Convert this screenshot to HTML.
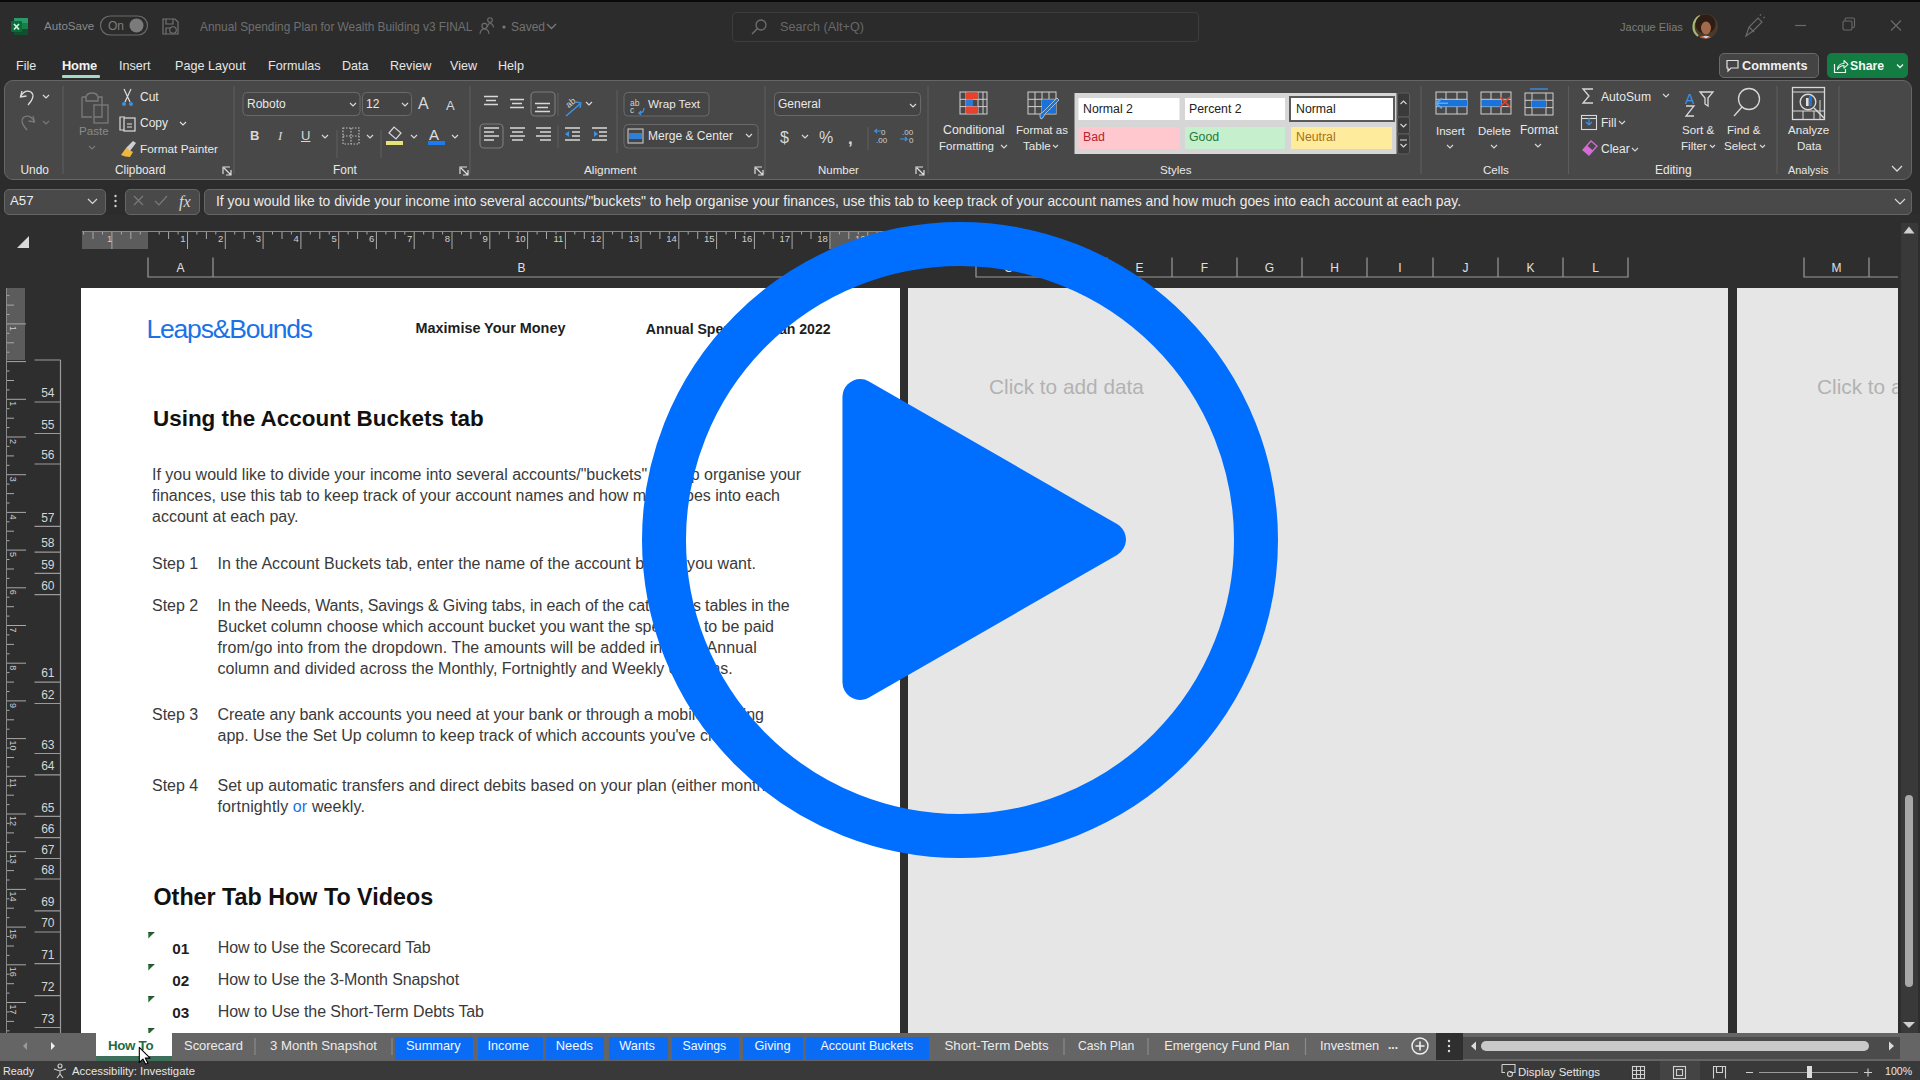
<!DOCTYPE html>
<html><head><meta charset="utf-8">
<style>
*{margin:0;padding:0;box-sizing:border-box}
html,body{width:1920px;height:1080px;overflow:hidden;background:#2c2c2c;font-family:"Liberation Sans",sans-serif;position:relative}
.a{position:absolute}
.t{position:absolute;white-space:nowrap;line-height:1}
#top{left:0;top:0;width:1920px;height:2px;background:#0a0a0a}
#ribbon{left:4px;top:80px;width:1908px;height:100px;background:#484848;border:1px solid #666;border-radius:9px}
#sheetbg{left:0;top:215px;width:1920px;height:818px;background:#2e2e2e}
#page{left:81px;top:288px;width:819px;height:745px;background:#fff}
#gray1{left:908px;top:288px;width:820px;height:745px;background:#e6e6e6}
#gray2{left:1737px;top:288px;width:161px;height:745px;background:#e6e6e6}
#vscroll{left:1901px;top:223px;width:17px;height:810px;background:#393939}
#tabbar{left:0;top:1033px;width:1920px;height:28px;background:#656565}
#status{left:0;top:1061px;width:1920px;height:19px;background:#393939}
</style></head><body>
<div id="top" class="a"></div>
<div id="ribbon" class="a"></div>
<div id="sheetbg" class="a"></div>
<div id="page" class="a"></div>
<div id="gray1" class="a"></div>
<div id="gray2" class="a"></div>
<div id="vscroll" class="a"></div>
<div id="tabbar" class="a"></div>
<div id="status" class="a"></div>
<!-- ===== TITLE BAR ===== -->
<svg class="a" style="left:0;top:0" width="600" height="48">
 <rect x="14" y="18" width="14" height="17" rx="1" fill="#15804a"/>
 <rect x="14" y="18" width="14" height="5" fill="#2a9a68"/>
 <rect x="14" y="29" width="14" height="6" fill="#10502e"/>
 <rect x="11" y="21" width="11" height="11" rx="1" fill="#0f6a3a"/>
 <path d="M14 24 L19 29.5 M19 24 L14 29.5" stroke="#c8f2dc" stroke-width="1.8"/>
 <rect x="100.5" y="16" width="47" height="19" rx="9.5" fill="none" stroke="#6b6b6b" stroke-width="1.2"/>
 <circle cx="136.5" cy="25.5" r="7" fill="#7b7b7b"/>
 <path d="M163 19 h12 l3 3 v12 h-15 z M166 19 v5 h7 v-5 M166 34 v-6 h6" fill="none" stroke="#727272" stroke-width="1.2"/>
 <circle cx="173" cy="30" r="3.3" fill="#2c2c2c" stroke="#727272" stroke-width="1.1"/>
 <circle cx="484.5" cy="26" r="2.6" fill="none" stroke="#6f6f6f" stroke-width="1.1"/>
 <path d="M480 34 q0.5 -5 4.5 -5 q4 0 4.5 5" fill="none" stroke="#6f6f6f" stroke-width="1.1"/>
 <circle cx="490" cy="20" r="2.3" fill="none" stroke="#6f6f6f" stroke-width="1.1"/>
 <path d="M487.5 27 q0.5 -3.5 2.5 -3.5 q3 0 3.5 4" fill="none" stroke="#6f6f6f" stroke-width="1.1"/>
 <circle cx="504" cy="27" r="1.6" fill="#7a7a7a"/>
 <path d="M547 24 l4.5 4.5 l4.5 -4.5" fill="none" stroke="#7a7a7a" stroke-width="1.3"/>
</svg>
<div class="t" style="left:44px;top:17px;font-size:11.6px;line-height:18px;color:#8a8a8a">AutoSave</div>
<div class="t" style="left:108px;top:17px;font-size:12px;line-height:18px;color:#7d7d7d">On</div>
<div class="t" style="left:200px;top:18px;font-size:11.85px;line-height:18px;color:#6f6f6f">Annual Spending Plan for Wealth Building v3 FINAL</div>
<div class="t" style="left:511px;top:18px;font-size:12px;line-height:18px;color:#727272">Saved</div>
<div class="a" style="left:732px;top:12px;width:467px;height:30px;border:1px solid #3d3d3d;border-radius:4px;background:#2b2b2b"></div>
<svg class="a" style="left:748px;top:16px" width="24" height="22"><circle cx="13" cy="9" r="5" fill="none" stroke="#6e6e6e" stroke-width="1.3"/><path d="M9.5 12.5 L4 18" stroke="#6e6e6e" stroke-width="1.4"/></svg>
<div class="t" style="left:780px;top:18px;font-size:12.65px;line-height:18px;color:#686868">Search (Alt+Q)</div>
<div class="t" style="left:1620px;top:18px;font-size:11.1px;line-height:18px;color:#7d7d7d">Jacque Elias</div>
<svg class="a" style="left:1690px;top:11px" width="32" height="32">
 <defs><clipPath id="av"><circle cx="15.5" cy="15.5" r="12"/></clipPath></defs>
 <circle cx="15.5" cy="15.5" r="12.5" fill="#4a3a2a"/>
 <path d="M8 25 A12 12 0 0 1 10 5" fill="none" stroke="#a8b870" stroke-width="2.2"/>
 <g clip-path="url(#av)">
  <circle cx="15.5" cy="13" r="10" fill="#2e1d14"/>
  <ellipse cx="16" cy="17" rx="5" ry="6.5" fill="#a26a4c"/>
  <path d="M5 29 q10 -9 21 0z" fill="#d4623a"/>
  <path d="M13 25 l3 3 l3 -3" fill="#c8d0e8"/>
 </g>
</svg>
<svg class="a" style="left:1738px;top:12px" width="180" height="30">
 <path d="M8 24 l3 -9 l9 -9 l4 4 l-9 9 z M11 15 l5 5" fill="none" stroke="#6a6a6a" stroke-width="1.2"/>
 <path d="M22 4 l1 -2 M25 6 l2 -1" stroke="#6a6a6a" stroke-width="1"/>
 <path d="M57 13.5 h11" stroke="#6a6a6a" stroke-width="1.2"/>
 <rect x="105" y="9" width="9" height="9" rx="1.5" fill="none" stroke="#6a6a6a" stroke-width="1.1"/>
 <path d="M107 9 v-1.5 q0 -1.5 1.5 -1.5 h6.5 q1.5 0 1.5 1.5 v6.5 q0 1.5 -1.5 1.5 h-1" fill="none" stroke="#6a6a6a" stroke-width="1.1"/>
 <path d="M153 8.5 l10 10 M163 8.5 l-10 10" stroke="#6a6a6a" stroke-width="1.2"/>
</svg>

<!-- ===== MENU ROW ===== -->
<div class="t" style="left:16px;top:56px;font-size:12.6px;line-height:20px;color:#e6e6e6">File</div>
<div class="t" style="left:62px;top:56px;font-size:12.9px;line-height:20px;color:#f2f2f2;font-weight:bold;letter-spacing:-0.2px">Home</div>
<div class="a" style="left:62px;top:75px;width:38px;height:2.5px;background:#a6d9c4;border-radius:1px"></div>
<div class="t" style="left:119px;top:56px;font-size:12.6px;line-height:20px;color:#e6e6e6">Insert</div>
<div class="t" style="left:175px;top:56px;font-size:12.6px;line-height:20px;color:#e6e6e6">Page Layout</div>
<div class="t" style="left:268px;top:56px;font-size:12.6px;line-height:20px;color:#e6e6e6">Formulas</div>
<div class="t" style="left:342px;top:56px;font-size:12.6px;line-height:20px;color:#e6e6e6">Data</div>
<div class="t" style="left:390px;top:56px;font-size:12.6px;line-height:20px;color:#e6e6e6">Review</div>
<div class="t" style="left:450px;top:56px;font-size:12.6px;line-height:20px;color:#e6e6e6">View</div>
<div class="t" style="left:498px;top:56px;font-size:12.6px;line-height:20px;color:#e6e6e6">Help</div>
<div class="a" style="left:1719px;top:53px;width:100px;height:25px;border:1px solid #6a6a6a;border-radius:5px;background:#444"></div>
<svg class="a" style="left:1725px;top:58px" width="16" height="16"><path d="M2 2.5 h11 v7.5 h-7 l-3 3 v-3 h-1 z" fill="none" stroke="#e0e0e0" stroke-width="1.2"/></svg>
<div class="t" style="left:1742px;top:56px;font-size:12.7px;line-height:20px;color:#f0f0f0;font-weight:bold">Comments</div>
<div class="a" style="left:1827px;top:53px;width:81px;height:25px;border-radius:5px;background:#127c42"></div>
<svg class="a" style="left:1833px;top:57px" width="76" height="18">
 <path d="M1.5 7 v8.5 h11 v-3.5" fill="none" stroke="#e8f5ec" stroke-width="1.2"/>
 <path d="M4.5 12.5 q0.5 -6 6.5 -6 v-3 l4 3.8 l-4 3.8 v-2.6 q-4 0 -6.5 4z" fill="none" stroke="#e8f5ec" stroke-width="1.1" stroke-linejoin="round"/>
 <path d="M64 7.5 l3 3 l3 -3" fill="none" stroke="#e8f5ec" stroke-width="1.3"/>
</svg>
<div class="t" style="left:1850px;top:56px;font-size:12.3px;line-height:20px;color:#f2f8f4;font-weight:bold">Share</div>
<!-- ===== RIBBON ===== -->
<svg class="a" style="left:0;top:80px" width="1920" height="102">
<g stroke="#5c5c5c" stroke-width="1.2">
 <path d="M63 6 V94"/><path d="M234 6 V94"/><path d="M470 6 V94"/><path d="M765 6 V94"/><path d="M928 6 V94"/>
 <path d="M1421 6 V94"/><path d="M1568.5 6 V94"/><path d="M1777 6 V94"/><path d="M1839 6 V94"/>
 <path d="M337 50 V78"/><path d="M617 10 V73"/><path d="M381 50 V78"/><path d="M558 13 V36"/><path d="M558 45 V68"/><path d="M868 47 V70"/>
</g>
<g fill="none" stroke="#dcdcdc" stroke-width="1.3">
 <!-- undo -->
 <path d="M22 11 l-1.5 6 l6 -1" /><path d="M21 16 q4 -7 10 -4 q5 4 -3 13"/>
 <path d="M43 15 l3 3 l3 -3" stroke-width="1.2"/>
</g>
<g fill="none" stroke="#7a7a7a" stroke-width="1.3">
 <path d="M33 36 l1.5 6 l-6 -1"/><path d="M34 41 q-4 -7 -10 -4 q-5 4 3 13"/>
 <path d="M43 41 l3 3 l3 -3" stroke-width="1.1"/>
 <!-- paste -->
 <path d="M82 17 h4 q1 -4 6 -4 q5 0 6 4 h4 v20 h-8"/><path d="M86 17 v4 h12 v-4"/>
 <path d="M82 17 v20 h10"/><rect x="94" y="25" width="14" height="18"/>
 <path d="M89 66 l3 3 l3 -3" stroke-width="1.1"/>
</g>
<g fill="none" stroke="#dedede" stroke-width="1.2">
 <!-- cut -->
 <path d="M124 9 l6 13 M131 9 l-6 13"/>
</g>
<circle cx="124" cy="24" r="2" fill="#3d8fe0"/><circle cx="131" cy="24" r="2" fill="#3d8fe0"/>
<g fill="none" stroke="#dedede" stroke-width="1.2">
 <!-- copy -->
 <path d="M125 37 h-5 v13 h4"/><rect x="124" y="38" width="11" height="13"/><path d="M127 44 h5 M127 47 h5"/>
 <path d="M180 42 l3 3 l3 -3"/>
 <!-- launcher -->
 <path d="M223 94 v-7 h7 M224 88 l7 7 M231 90 v5 h-5"/>
 <path d="M460 94 v-7 h7 M461 88 l7 7 M468 90 v5 h-5"/>
 <path d="M755 94 v-7 h7 M756 88 l7 7 M763 90 v5 h-5"/>
 <path d="M916 94 v-7 h7 M917 88 l7 7 M924 90 v5 h-5"/>
</g>
<path d="M121 75 l5 -7 l7 4 l-3 5 q-5 0 -9 -2z" fill="#f0b73a"/><path d="M126 68 l7 -7 l3 2 l-6 8z" fill="#cfcfcf"/>
<!-- font group -->
<rect x="243" y="12.5" width="117" height="23" rx="4" fill="#444" stroke="#6a6a6a"/>
<rect x="362.5" y="12.5" width="49" height="23" rx="4" fill="#444" stroke="#6a6a6a"/>
<g fill="none" stroke="#d8d8d8" stroke-width="1.2">
 <path d="M350 23 l3 3 l3 -3"/><path d="M402 23 l3 3 l3 -3"/>
 <path d="M322 55 l3 3 l3 -3"/><path d="M367 55 l3 3 l3 -3"/><path d="M411 55 l3 3 l3 -3"/><path d="M452 55 l3 3 l3 -3"/>
 <path d="M343 48 h16 v16 h-16z M351 48 v16 M343 56 h16" stroke-dasharray="1.5 1.5" stroke="#bdbdbd"/>
 <path d="M389 53 l5 -6 l7 6 l-5 6z" />
</g>
<rect x="386" y="61" width="17" height="4" fill="#e8e27a"/>
<rect x="428" y="61" width="17" height="4" fill="#1a7cf0"/>
<!-- alignment icons -->
<g stroke="#d8d8d8" stroke-width="1.4">
 <path d="M484 16.5 h14 M486 20.5 h10 M484 24.5 h14"/>
 <path d="M510 19.5 h14 M512 23.5 h10 M510 27.5 h14"/>
 <path d="M535 23.5 h15 M537 27.5 h11 M535 31.5 h15"/>
 <path d="M484 128 h15 M484 132 h10 M484 136 h15 M484 140 h10" transform="translate(0,-80)"/>
 <path d="M510 48 h15 M512 52 h11 M510 56 h15 M512 60 h11"/>
 <path d="M536 48 h15 M540 52 h11 M536 56 h15 M540 60 h11"/>
 <path d="M565 48 h15 M572 52 h8 M572 56 h8 M565 60 h15"/>
 <path d="M592 48 h15 M599 52 h8 M599 56 h8 M592 60 h15"/>
</g>
<path d="M565 54 l4 -3 v6z" fill="#3b93e6"/><path d="M598 54 l-4 -3 v6z" fill="#3b93e6"/>
<rect x="531" y="12" width="24" height="24" rx="4" fill="none" stroke="#7a7a7a" stroke-width="1.2"/>
<rect x="480" y="44" width="23" height="24" rx="4" fill="none" stroke="#7a7a7a" stroke-width="1.2"/>
<path d="M566 36 l14 -12" stroke="#3b93e6" stroke-width="1.6"/><path d="M576 22 l5 1 l-1 5" fill="none" stroke="#3b93e6" stroke-width="1.3"/>
<text x="565" y="26" font-size="9" fill="#d8d8d8" font-family="Liberation Sans" transform="rotate(-40 570 22)">ab</text>
<path d="M586 22 l3 3 l3 -3" fill="none" stroke="#d8d8d8" stroke-width="1.2"/>
<rect x="624" y="12.5" width="85" height="23.5" rx="4" fill="#454545" stroke="#6a6a6a"/>
<rect x="624" y="44.5" width="134" height="23.5" rx="4" fill="#454545" stroke="#6a6a6a"/>
<text x="630" y="26" font-size="8.5" fill="#d0d0d0" font-family="Liberation Sans">ab</text><text x="630" y="33" font-size="8.5" fill="#d0d0d0" font-family="Liberation Sans">c</text>
<path d="M644 28 q0 5 -5 5 l2 -2 M639 33 l2 2" fill="none" stroke="#3b93e6" stroke-width="1.3"/>
<rect x="628" y="49" width="15" height="14" fill="none" stroke="#c8c8c8" stroke-width="1.1"/>
<rect x="629" y="53" width="13" height="6" fill="#2f7fd8"/>
<path d="M746 54 l3 3 l3 -3" fill="none" stroke="#d8d8d8" stroke-width="1.2"/>
<!-- number group -->
<rect x="774.5" y="12.5" width="146" height="23" rx="4" fill="#444" stroke="#6a6a6a"/>
<path d="M910 24 l3 3 l3 -3" fill="none" stroke="#d8d8d8" stroke-width="1.2"/>
<path d="M802 55 l3 3 l3 -3" fill="none" stroke="#d8d8d8" stroke-width="1.2"/>
<text x="780" y="63" font-size="16" fill="#d8d8d8" font-family="Liberation Sans">$</text>
<text x="819" y="63" font-size="16" fill="#d8d8d8" font-family="Liberation Sans">%</text>
<text x="848" y="64" font-size="17" fill="#d8d8d8" font-family="Liberation Sans" font-weight="bold">,</text>
<text x="881" y="55" font-size="8" fill="#cfcfcf" font-family="Liberation Sans">0</text><text x="876" y="63" font-size="8" fill="#cfcfcf" font-family="Liberation Sans">.00</text>
<path d="M882 51 h-7 l2 -2 M875 51 l2 2" fill="none" stroke="#3b93e6" stroke-width="1.2"/>
<text x="902" y="55" font-size="8" fill="#cfcfcf" font-family="Liberation Sans">.00</text><text x="909" y="63" font-size="8" fill="#cfcfcf" font-family="Liberation Sans">0</text>
<path d="M900 59 h7 l-2 -2 M907 59 l-2 2" fill="none" stroke="#3b93e6" stroke-width="1.2"/>
<!-- conditional formatting icon -->
<g fill="none" stroke="#cfcfcf" stroke-width="1">
 <rect x="960" y="12" width="27" height="22"/><path d="M960 19.3 h27 M960 26.6 h27 M966 12 v22 M978 12 v22 M983 12 v22"/>
 <rect x="1028" y="12" width="28" height="22"/><path d="M1028 19.3 h28 M1028 26.6 h28 M1035 12 v22 M1042 12 v22 M1049 12 v22"/>
</g>
<rect x="966" y="12.5" width="12" height="6.5" fill="#e8412c"/><rect x="966" y="19.5" width="7" height="6.5" fill="#2b7ad4"/><rect x="966" y="26.5" width="12" height="7" fill="#e8412c"/>
<rect x="1042" y="19.5" width="14" height="14" fill="#1a73d9"/>
<path d="M1041 39 q-3 -5 2 -7 l14 -14 l2 2 l-14 14 q-2 5 -4 5z" fill="#1a73d9" stroke="#cfcfcf" stroke-width="0.8"/>
<g fill="none" stroke="#d8d8d8" stroke-width="1.1">
 <path d="M1001 65 l3 3 l3 -3"/><path d="M1053 65 l2.5 2.5 l2.5 -2.5"/>
</g>
<!-- styles gallery -->
<rect x="1074.5" y="13" width="322" height="61" fill="#d6d6d6"/>
<rect x="1078.5" y="18" width="101" height="22" fill="#ffffff"/>
<rect x="1185" y="18" width="100" height="22" fill="#ffffff"/>
<rect x="1290" y="17" width="104" height="24" fill="#ffffff" stroke="#5a5a5a" stroke-width="2"/>
<rect x="1078.5" y="47" width="101" height="22" fill="#ffc7ce"/>
<rect x="1185" y="47" width="100" height="22" fill="#c6efce"/>
<rect x="1291" y="47" width="101" height="22" fill="#ffeb9c"/>
<g fill="#3a3a3a" stroke="#5e5e5e">
 <rect x="1397.5" y="13" width="12" height="24" rx="2"/><rect x="1397.5" y="37" width="12" height="17" rx="2"/><rect x="1397.5" y="54" width="12" height="20" rx="2"/>
</g>
<g fill="none" stroke="#d8d8d8" stroke-width="1.1">
 <path d="M1400.5 24 l3 -3 l3 3"/><path d="M1400.5 44 l3 3 l3 -3"/><path d="M1400 60 h7 M1400.5 64 l3 3 l3 -3"/>
</g>
<!-- cells -->
<g fill="none" stroke="#cfcfcf" stroke-width="1">
 <rect x="1436" y="12" width="31" height="22"/><path d="M1436 19.3 h31 M1436 26.6 h31 M1446 12 v22 M1457 12 v22"/>
 <rect x="1481" y="12" width="30" height="22"/><path d="M1481 19.3 h30 M1481 26.6 h30 M1491 12 v22 M1501 12 v22"/>
 <rect x="1525" y="13" width="28" height="22"/><path d="M1525 20.3 h28 M1525 27.6 h28 M1532 13 v22 M1546 13 v22"/>
</g>
<rect x="1437" y="20" width="30" height="6.5" fill="#1a73d9"/>
<path d="M1436 23.3 l6 -5 M1436 23.3 l6 5 M1436 23.3 h12" stroke="#5aaaf5" stroke-width="1.6" fill="none"/>
<rect x="1482" y="20" width="19" height="6.5" fill="#1a73d9"/>
<path d="M1500 17 l10 10 M1510 17 l-10 10" stroke="#e8412c" stroke-width="1.6"/>
<rect x="1532" y="20.5" width="14" height="7" fill="#1a73d9"/><path d="M1530 9 h18" stroke="#3b93e6" stroke-width="1.3"/>
<g fill="none" stroke="#d8d8d8" stroke-width="1.1">
 <path d="M1447 65 l3 3 l3 -3"/><path d="M1491 65 l3 3 l3 -3"/><path d="M1535 64 l3 3 l3 -3"/>
 <path d="M1663 14 l3 3 l3 -3"/><path d="M1619 41 l3 3 l3 -3"/><path d="M1632 68 l3 3 l3 -3"/>
 <path d="M1593 9 h-10 l6 7 l-6 7 h10" stroke-width="1.3"/>
 <rect x="1581.5" y="35.5" width="15" height="14"/><path d="M1581.5 38.5 h15"/>
 <path d="M1710 65 l2.5 2.5 l2.5 -2.5"/><path d="M1760 65 l2.5 2.5 l2.5 -2.5"/>
 <path d="M1700 12 h13 l-5 6 v8 l-3 -2 v-6 z" stroke-width="1.3"/>
 <path d="M1686 26 h8 l-8 10 h8" stroke-width="1.3"/>
 <circle cx="1749" cy="19" r="10.5" stroke-width="1.3"/><path d="M1742 27 l-8 9" stroke-width="1.3"/>
 <rect x="1792.5" y="7.5" width="32" height="32" stroke-width="1.3"/><path d="M1792.5 12 h32 M1792.5 31 h32 M1803 31 v9 M1814 31 v9 M1820 20 v20" stroke-width="1"/>
 <circle cx="1808" cy="22" r="7.8" stroke-width="1.4"/><path d="M1814 28 l10 10" stroke-width="1.4"/>
 <path d="M1892 86 l5 5 l5 -5" stroke-width="1.3"/>
</g>
<path d="M1589 38 v7 M1586 42 l3 3 l3 -3" fill="none" stroke="#3b93e6" stroke-width="1.2"/>
<path d="M1583 70 l8 -9 l6 5 l-8 9 z" fill="none" stroke="#d86ad8" stroke-width="1.3"/><path d="M1583 70 l4 -4.5 l6 5 l-4 4.5z" fill="#d86ad8"/>
<text x="1685" y="24" font-size="14" fill="#3b93e6" font-family="Liberation Sans">A</text>
<rect x="1806" y="18" width="2.6" height="8" fill="#e0e0e0"/><rect x="1809" y="16" width="3" height="10" fill="#1a73d9"/>
</svg>
<!-- ribbon text -->
<div class="t" style="left:20.5px;top:161px;font-size:11.9px;line-height:18px;color:#e8e8e8">Undo</div>
<div class="t" style="left:115px;top:161px;font-size:11.85px;line-height:18px;color:#e8e8e8">Clipboard</div>
<div class="t" style="left:333px;top:161px;font-size:11.9px;line-height:18px;color:#e8e8e8">Font</div>
<div class="t" style="left:584px;top:161px;font-size:11.8px;line-height:18px;color:#e8e8e8">Alignment</div>
<div class="t" style="left:818px;top:161px;font-size:11.5px;line-height:18px;color:#e8e8e8">Number</div>
<div class="t" style="left:1160px;top:161px;font-size:11.6px;line-height:18px;color:#e8e8e8">Styles</div>
<div class="t" style="left:1483px;top:161px;font-size:11.6px;line-height:18px;color:#e8e8e8">Cells</div>
<div class="t" style="left:1655px;top:161px;font-size:11.97px;line-height:18px;color:#e8e8e8">Editing</div>
<div class="t" style="left:1788px;top:161px;font-size:10.9px;line-height:18px;color:#e8e8e8">Analysis</div>
<div class="t" style="left:79px;top:122px;font-size:11.6px;line-height:18px;color:#8a8a8a">Paste</div>
<div class="t" style="left:140px;top:88px;font-size:12px;line-height:18px;color:#e8e8e8">Cut</div>
<div class="t" style="left:140px;top:114px;font-size:12px;line-height:18px;color:#e8e8e8">Copy</div>
<div class="t" style="left:140px;top:140px;font-size:11.8px;line-height:18px;color:#e8e8e8">Format Painter</div>
<div class="t" style="left:247px;top:95px;font-size:12px;line-height:18px;color:#e8e8e8">Roboto</div>
<div class="t" style="left:366px;top:95px;font-size:12px;line-height:18px;color:#e8e8e8">12</div>
<div class="t" style="left:418px;top:94px;font-size:16px;line-height:20px;color:#d8d8d8">A</div>
<div class="t" style="left:446px;top:97px;font-size:13px;line-height:18px;color:#d8d8d8">A</div>
<div class="t" style="left:250px;top:127px;font-size:13px;line-height:18px;color:#d8d8d8;font-weight:bold">B</div>
<div class="t" style="left:278px;top:127px;font-size:13px;line-height:18px;color:#d8d8d8;font-style:italic;font-family:'Liberation Serif'">I</div>
<div class="t" style="left:301px;top:127px;font-size:13px;line-height:18px;color:#d8d8d8;text-decoration:underline">U</div>
<div class="t" style="left:429px;top:126px;font-size:15px;line-height:18px;color:#e0e0e0">A</div>
<div class="t" style="left:648px;top:95px;font-size:11.65px;line-height:18px;color:#e8e8e8">Wrap Text</div>
<div class="t" style="left:648px;top:127px;font-size:12.04px;line-height:18px;color:#e8e8e8">Merge &amp; Center</div>
<div class="t" style="left:778px;top:95px;font-size:12px;line-height:18px;color:#e8e8e8">General</div>
<div class="t" style="left:943px;top:121px;font-size:12.3px;line-height:18px;color:#e8e8e8">Conditional</div>
<div class="t" style="left:939px;top:137px;font-size:11.5px;line-height:18px;color:#e8e8e8">Formatting</div>
<div class="t" style="left:1016px;top:121px;font-size:11.55px;line-height:18px;color:#e8e8e8">Format as</div>
<div class="t" style="left:1023px;top:137px;font-size:11.6px;line-height:18px;color:#e8e8e8">Table</div>
<div class="t" style="left:1083px;top:100px;font-size:12.3px;line-height:18px;color:#222">Normal 2</div>
<div class="t" style="left:1189px;top:100px;font-size:12.3px;line-height:18px;color:#222">Percent 2</div>
<div class="t" style="left:1296px;top:100px;font-size:12.3px;line-height:18px;color:#222">Normal</div>
<div class="t" style="left:1083px;top:128px;font-size:12.3px;line-height:18px;color:#b5252e">Bad</div>
<div class="t" style="left:1189px;top:128px;font-size:12.3px;line-height:18px;color:#1e7a38">Good</div>
<div class="t" style="left:1296px;top:128px;font-size:12.3px;line-height:18px;color:#a8701a">Neutral</div>
<div class="t" style="left:1436px;top:122px;font-size:11.5px;line-height:18px;color:#e8e8e8">Insert</div>
<div class="t" style="left:1478px;top:122px;font-size:11.4px;line-height:18px;color:#e8e8e8">Delete</div>
<div class="t" style="left:1520px;top:121px;font-size:12px;line-height:18px;color:#e8e8e8">Format</div>
<div class="t" style="left:1601px;top:88px;font-size:12.16px;line-height:18px;color:#e8e8e8">AutoSum</div>
<div class="t" style="left:1601px;top:114px;font-size:12px;line-height:18px;color:#e8e8e8">Fill</div>
<div class="t" style="left:1601px;top:140px;font-size:12px;line-height:18px;color:#e8e8e8">Clear</div>
<div class="t" style="left:1682px;top:121px;font-size:11.6px;line-height:18px;color:#e8e8e8">Sort &amp;</div>
<div class="t" style="left:1681px;top:137px;font-size:11.6px;line-height:18px;color:#e8e8e8">Filter</div>
<div class="t" style="left:1727px;top:121px;font-size:11.6px;line-height:18px;color:#e8e8e8">Find &amp;</div>
<div class="t" style="left:1724px;top:137px;font-size:11.6px;line-height:18px;color:#e8e8e8">Select</div>
<div class="t" style="left:1788px;top:121px;font-size:11.6px;line-height:18px;color:#e8e8e8">Analyze</div>
<div class="t" style="left:1797px;top:137px;font-size:11.6px;line-height:18px;color:#e8e8e8">Data</div>
<!-- FORMULA -->
<div class="a" style="left:4px;top:189px;width:102px;height:26px;border:1px solid #666;border-radius:5px;background:#494949"></div>
<div class="t" style="left:10px;top:192px;font-size:13.2px;line-height:18px;color:#ececec">A57</div>
<div class="a" style="left:125px;top:189px;width:75px;height:26px;border:1px solid #666;border-radius:5px;background:#494949"></div>
<div class="a" style="left:204px;top:189px;width:1708px;height:26px;border:1px solid #666;border-radius:5px;background:#494949"></div>
<div class="t" style="left:216px;top:192px;font-size:13.9px;line-height:18px;color:#ececec">If you would like to divide your income into several accounts/"buckets" to help organise your finances, use this tab to keep track of your account names and how much goes into each account at each pay.</div>
<svg class="a" style="left:0;top:185px" width="1920" height="34">
<g fill="none" stroke-width="1.2">
<path d="M88 14 l4.5 4.5 l4.5 -4.5" stroke="#d8d8d8"/>
<path d="M134 11 l9 9 M143 11 l-9 9" stroke="#7a7a7a"/>
<path d="M155 16 l4 4 l8 -9" stroke="#7a7a7a"/>
<path d="M1895 14 l5 5 l5 -5" stroke="#d8d8d8"/>
</g>
<circle cx="115.5" cy="11" r="1.2" fill="#cfcfcf"/><circle cx="115.5" cy="16" r="1.2" fill="#cfcfcf"/><circle cx="115.5" cy="21" r="1.2" fill="#cfcfcf"/>
<text x="179" y="22" font-family="Liberation Serif" font-style="italic" font-size="16" fill="#d8d8d8">fx</text>
</svg>
<!-- SHEET --><svg class="a" style="left:0;top:215px" width="1920" height="818">
<path d="M17 33 L29 21 L29 33 Z" fill="#d8d8d8"/>
<rect x="82" y="16.5" width="66" height="17.5" fill="#5c5c5c"/>
<rect x="830" y="16.5" width="70" height="17.5" fill="#5c5c5c"/>
<path d="M82 16.5 H900" stroke="#8a8a8a" stroke-width="1"/>
<path d="M111.9 17 V34 M187.5 17 V34 M225.3 17 V34 M263.1 17 V34 M300.9 17 V34 M338.7 17 V34 M376.4 17 V34 M414.2 17 V34 M452.0 17 V34 M489.8 17 V34 M527.6 17 V34 M565.4 17 V34 M603.2 17 V34 M641.0 17 V34 M678.8 17 V34 M716.6 17 V34 M754.4 17 V34 M792.1 17 V34 M829.9 17 V34 M867.7 17 V34 M83.6 17 V19.5 M93.0 17 V24 M102.5 17 V19.5 M121.4 17 V19.5 M130.8 17 V24 M140.3 17 V19.5 M159.2 17 V19.5 M168.6 17 V24 M178.1 17 V19.5 M196.9 17 V19.5 M206.4 17 V24 M215.8 17 V19.5 M234.7 17 V19.5 M244.2 17 V24 M253.6 17 V19.5 M272.5 17 V19.5 M282.0 17 V24 M291.4 17 V19.5 M310.3 17 V19.5 M319.8 17 V24 M329.2 17 V19.5 M348.1 17 V19.5 M357.6 17 V24 M367.0 17 V19.5 M385.9 17 V19.5 M395.3 17 V24 M404.8 17 V19.5 M423.7 17 V19.5 M433.1 17 V24 M442.6 17 V19.5 M461.5 17 V19.5 M470.9 17 V24 M480.4 17 V19.5 M499.3 17 V19.5 M508.7 17 V24 M518.2 17 V19.5 M537.1 17 V19.5 M546.5 17 V24 M556.0 17 V19.5 M574.8 17 V19.5 M584.3 17 V24 M593.7 17 V19.5 M612.6 17 V19.5 M622.1 17 V24 M631.5 17 V19.5 M650.4 17 V19.5 M659.9 17 V24 M669.3 17 V19.5 M688.2 17 V19.5 M697.7 17 V24 M707.1 17 V19.5 M726.0 17 V19.5 M735.5 17 V24 M744.9 17 V19.5 M763.8 17 V19.5 M773.2 17 V24 M782.7 17 V19.5 M801.6 17 V19.5 M811.0 17 V24 M820.5 17 V19.5 M839.4 17 V19.5 M848.8 17 V24 M858.3 17 V19.5 M877.2 17 V19.5 M886.6 17 V24 M896.1 17 V19.5" stroke="#a8a8a8" stroke-width="1"/>
<g font-family="Liberation Sans" font-size="9.5" fill="#cfcfcf"><text x="185.5" y="27" text-anchor="end">1</text><text x="223.3" y="27" text-anchor="end">2</text><text x="261.1" y="27" text-anchor="end">3</text><text x="298.9" y="27" text-anchor="end">4</text><text x="336.7" y="27" text-anchor="end">5</text><text x="374.4" y="27" text-anchor="end">6</text><text x="412.2" y="27" text-anchor="end">7</text><text x="450.0" y="27" text-anchor="end">8</text><text x="487.8" y="27" text-anchor="end">9</text><text x="525.6" y="27" text-anchor="end">10</text><text x="563.4" y="27" text-anchor="end">11</text><text x="601.2" y="27" text-anchor="end">12</text><text x="639.0" y="27" text-anchor="end">13</text><text x="676.8" y="27" text-anchor="end">14</text><text x="714.6" y="27" text-anchor="end">15</text><text x="752.4" y="27" text-anchor="end">16</text><text x="790.1" y="27" text-anchor="end">17</text><text x="827.9" y="27" text-anchor="end">18</text><text x="865.7" y="27" text-anchor="end">19</text><text x="112.4" y="27" text-anchor="end">1</text></g>
<g stroke="#9a9a9a" stroke-width="1.2" fill="none">
<path d="M148 42.5 V62 H830 V42.5 M213 42.5 V62"/>
<path d="M976 42.5 V62 H1628 V42.5"/>
<path d="M1041 42.5 V62"/>
<path d="M1107 42.5 V62"/>
<path d="M1172 42.5 V62"/>
<path d="M1237 42.5 V62"/>
<path d="M1302 42.5 V62"/>
<path d="M1367 42.5 V62"/>
<path d="M1433 42.5 V62"/>
<path d="M1498 42.5 V62"/>
<path d="M1563 42.5 V62"/>
<path d="M1804 42.5 V62 H1898 M1869 42.5 V62"/>
</g>
<g font-family="Liberation Sans" font-size="12" fill="#e0e0e0" text-anchor="middle"><text x="180.5" y="56.5">A</text><text x="521.5" y="56.5">B</text><text x="1008.5" y="56.5">C</text><text x="1074" y="56.5">D</text><text x="1139.5" y="56.5">E</text><text x="1204.5" y="56.5">F</text><text x="1269.5" y="56.5">G</text><text x="1334.5" y="56.5">H</text><text x="1400" y="56.5">I</text><text x="1465.5" y="56.5">J</text><text x="1530.5" y="56.5">K</text><text x="1595.5" y="56.5">L</text><text x="1836.5" y="56.5">M</text></g>
<rect x="6.5" y="73" width="18.5" height="72" fill="#5c5c5c"/>
<path d="M6.5 73 V818" stroke="#8a8a8a" stroke-width="1"/>
<path d="M7 80.6 H9.5 M7 90.1 H14 M7 99.5 H9.5 M7 108.9 H26 M7 118.3 H9.5 M7 127.8 H14 M7 137.2 H9.5 M7 146.6 H26 M7 156.0 H9.5 M7 165.5 H14 M7 174.9 H9.5 M7 184.3 H26 M7 193.7 H9.5 M7 203.2 H14 M7 212.6 H9.5 M7 222.0 H26 M7 231.4 H9.5 M7 240.9 H14 M7 250.3 H9.5 M7 259.7 H26 M7 269.1 H9.5 M7 278.6 H14 M7 288.0 H9.5 M7 297.4 H26 M7 306.8 H9.5 M7 316.2 H14 M7 325.7 H9.5 M7 335.1 H26 M7 344.5 H9.5 M7 354.0 H14 M7 363.4 H9.5 M7 372.8 H26 M7 382.2 H9.5 M7 391.7 H14 M7 401.1 H9.5 M7 410.5 H26 M7 419.9 H9.5 M7 429.4 H14 M7 438.8 H9.5 M7 448.2 H26 M7 457.6 H9.5 M7 467.1 H14 M7 476.5 H9.5 M7 485.9 H26 M7 495.3 H9.5 M7 504.8 H14 M7 514.2 H9.5 M7 523.6 H26 M7 533.0 H9.5 M7 542.5 H14 M7 551.9 H9.5 M7 561.3 H26 M7 570.7 H9.5 M7 580.2 H14 M7 589.6 H9.5 M7 599.0 H26 M7 608.4 H9.5 M7 617.9 H14 M7 627.3 H9.5 M7 636.7 H26 M7 646.1 H9.5 M7 655.6 H14 M7 665.0 H9.5 M7 674.4 H26 M7 683.8 H9.5 M7 693.2 H14 M7 702.7 H9.5 M7 712.1 H26 M7 721.5 H9.5 M7 731.0 H14 M7 740.4 H9.5 M7 749.8 H26 M7 759.2 H9.5 M7 768.7 H14 M7 778.1 H9.5 M7 787.5 H26 M7 796.9 H9.5 M7 806.4 H14 M7 815.8 H9.5" stroke="#a8a8a8" stroke-width="1"/>
<g font-family="Liberation Sans" font-size="9" fill="#cfcfcf"><text transform="translate(10 186.3) rotate(90)">1</text><text transform="translate(10 224.0) rotate(90)">2</text><text transform="translate(10 261.7) rotate(90)">3</text><text transform="translate(10 299.4) rotate(90)">4</text><text transform="translate(10 337.1) rotate(90)">5</text><text transform="translate(10 374.8) rotate(90)">6</text><text transform="translate(10 412.5) rotate(90)">7</text><text transform="translate(10 450.2) rotate(90)">8</text><text transform="translate(10 487.9) rotate(90)">9</text><text transform="translate(10 525.6) rotate(90)">10</text><text transform="translate(10 563.3) rotate(90)">11</text><text transform="translate(10 601.0) rotate(90)">12</text><text transform="translate(10 638.7) rotate(90)">13</text><text transform="translate(10 676.4) rotate(90)">14</text><text transform="translate(10 714.1) rotate(90)">15</text><text transform="translate(10 751.8) rotate(90)">16</text><text transform="translate(10 789.5) rotate(90)">17</text><text transform="translate(10 110.9) rotate(90)">1</text></g>
<path d="M60.5 145.0 V818 M34.5 145.0 H60.5 M34.5 187.0 H60.5 M34.5 218.5 H60.5 M34.5 249.0 H60.5 M34.5 311.3 H60.5 M34.5 337.2 H60.5 M34.5 358.3 H60.5 M34.5 379.6 H60.5 M34.5 467.2 H60.5 M34.5 488.5 H60.5 M34.5 538.5 H60.5 M34.5 559.8 H60.5 M34.5 601.3 H60.5 M34.5 622.6 H60.5 M34.5 643.5 H60.5 M34.5 664.0 H60.5 M34.5 695.8 H60.5 M34.5 717.0 H60.5 M34.5 748.7 H60.5 M34.5 780.7 H60.5 M34.5 812.5 H60.5" stroke="#9a9a9a" stroke-width="1.2"/>
<g font-family="Liberation Sans" font-size="12" fill="#d6d6d6" text-anchor="end"><text x="54.5" y="182.2">54</text><text x="54.5" y="213.7">55</text><text x="54.5" y="244.2">56</text><text x="54.5" y="306.5">57</text><text x="54.5" y="332.4">58</text><text x="54.5" y="353.5">59</text><text x="54.5" y="374.8">60</text><text x="54.5" y="462.4">61</text><text x="54.5" y="483.7">62</text><text x="54.5" y="533.7">63</text><text x="54.5" y="555.0">64</text><text x="54.5" y="596.5">65</text><text x="54.5" y="617.8">66</text><text x="54.5" y="638.7">67</text><text x="54.5" y="659.2">68</text><text x="54.5" y="691.0">69</text><text x="54.5" y="712.2">70</text><text x="54.5" y="743.9">71</text><text x="54.5" y="775.9">72</text><text x="54.5" y="807.7">73</text></g>
<path d="M1903.5 18.5 l5.5 -7 l5.5 7z" fill="#d0d0d0"/>
<path d="M1903 807 l6 6 l6 -6z" fill="#cfcfcf"/>
<rect x="1905" y="580" width="8" height="192" rx="4" fill="#a8a8a8"/>
</svg>
<div class="t" style="left:989px;top:377px;font-size:20.8px;line-height:20.8px;color:#b2b2b2">Click to add data</div>
<div class="a" style="left:1737px;top:288px;width:161px;height:120px;overflow:hidden"><div class="t" style="left:80px;top:89px;font-size:20.8px;line-height:20.8px;color:#b2b2b2">Click to add data</div></div><!-- PAGE -->
<div class="t" style="left:146.5px;top:315.5px;font-size:26.5px;color:#1b72e6;letter-spacing:-1.2px">Leaps&amp;Bounds</div>
<div class="t" style="left:415.6px;top:321.41px;font-size:14.4px;color:#1e1e1e;font-weight:bold;">Maximise Your Money</div>
<div class="t" style="left:645.8px;top:321.66px;font-size:14.1px;color:#1e1e1e;font-weight:bold;">Annual Spending Plan 2022</div>
<div class="t" style="left:153px;top:408.20px;font-size:22.45px;color:#111;font-weight:bold;">Using the Account Buckets tab</div>
<div class="t" style="left:152px;top:466.86px;font-size:16px;color:#3a3a3a;">If you would like to divide your income into several accounts/"buckets" to help organise your</div>
<div class="t" style="left:152px;top:488.06px;font-size:16px;letter-spacing:-0.020px;color:#3a3a3a;">finances, use this tab to keep track of your account names and how much goes into each</div>
<div class="t" style="left:152px;top:509.06px;font-size:16px;color:#3a3a3a;">account at each pay.</div>
<div class="t" style="left:152px;top:555.96px;font-size:16px;color:#3a3a3a;">Step 1</div>
<div class="t" style="left:217.5px;top:555.96px;font-size:16px;letter-spacing:0.041px;color:#3a3a3a;">In the Account Buckets tab, enter the name of the account bucket you want.</div>
<div class="t" style="left:152px;top:597.76px;font-size:16px;color:#3a3a3a;">Step 2</div>
<div class="t" style="left:217.5px;top:597.76px;font-size:16px;letter-spacing:-0.141px;color:#3a3a3a;">In the Needs, Wants, Savings &amp; Giving tabs, in each of the categories tables in the</div>
<div class="t" style="left:217.5px;top:618.76px;font-size:16px;letter-spacing:-0.016px;color:#3a3a3a;">Bucket column choose which account bucket you want the spending to be paid</div>
<div class="t" style="left:217.5px;top:639.76px;font-size:16px;letter-spacing:0.096px;color:#3a3a3a;">from/go into from the dropdown. The amounts will be added into the Annual</div>
<div class="t" style="left:217.5px;top:660.76px;font-size:16px;color:#3a3a3a;">column and divided across the Monthly, Fortnightly and Weekly columns.</div>
<div class="t" style="left:152px;top:706.86px;font-size:16px;color:#3a3a3a;">Step 3</div>
<div class="t" style="left:217.5px;top:706.86px;font-size:16px;letter-spacing:-0.068px;color:#3a3a3a;">Create any bank accounts you need at your bank or through a mobile banking</div>
<div class="t" style="left:217.5px;top:728.06px;font-size:16px;color:#3a3a3a;">app. Use the Set Up column to keep track of which accounts you've created.</div>
<div class="t" style="left:152px;top:778.06px;font-size:16px;color:#3a3a3a;">Step 4</div>
<div class="t" style="left:217.5px;top:778.06px;font-size:16px;color:#3a3a3a;">Set up automatic transfers and direct debits based on your plan (either monthly,</div>
<div class="t" style="left:217.5px;top:798.76px;font-size:16px;letter-spacing:0.127px;color:#3a3a3a;">fortnightly <span style="color:#1b72e6">or</span> weekly.</div>
<div class="t" style="left:153.5px;top:886.08px;font-size:23.3px;color:#111;font-weight:bold;">Other Tab How To Videos</div>
<div class="t" style="left:172.3px;top:940.95px;font-size:15.3px;color:#1e1e1e;font-weight:bold;">01</div>
<div class="t" style="left:217.8px;top:940.36px;font-size:16px;letter-spacing:-0.143px;color:#3a3a3a;">How to Use the Scorecard Tab</div>
<div class="t" style="left:172.3px;top:972.85px;font-size:15.3px;color:#1e1e1e;font-weight:bold;">02</div>
<div class="t" style="left:217.8px;top:972.26px;font-size:16px;letter-spacing:-0.110px;color:#3a3a3a;">How to Use the 3-Month Snapshot</div>
<div class="t" style="left:172.3px;top:1004.65px;font-size:15.3px;color:#1e1e1e;font-weight:bold;">03</div>
<div class="t" style="left:217.8px;top:1004.06px;font-size:16px;letter-spacing:-0.086px;color:#3a3a3a;">How to Use the Short-Term Debts Tab</div>
<svg class="a" style="left:140px;top:925px" width="20" height="110"><path d="M8.3 7.2 H14.6 L8.3 13.5 Z" fill="#1f6e2c"/><path d="M8.3 7.7 H14.2" stroke="#2a3a2a" stroke-width="1"/><path d="M8.3 39.2 H14.6 L8.3 45.5 Z" fill="#1f6e2c"/><path d="M8.3 39.7 H14.2" stroke="#2a3a2a" stroke-width="1"/><path d="M8.3 71.2 H14.6 L8.3 77.5 Z" fill="#1f6e2c"/><path d="M8.3 71.7 H14.2" stroke="#2a3a2a" stroke-width="1"/><path d="M8.3 103.2 H14.6 L8.3 109.5 Z" fill="#1f6e2c"/><path d="M8.3 103.7 H14.2" stroke="#2a3a2a" stroke-width="1"/></svg><!-- TABS -->
<div class="a" style="left:96px;top:1033px;width:76px;height:23px;background:#fff"></div>
<div class="a" style="left:96px;top:1056px;width:76px;height:5px;background:#3d6f5a"></div>
<div class="a" style="left:395px;top:1037px;width:77.50px;height:22.5px;background:#0a6cf5"></div>
<div class="a" style="left:477.5px;top:1037px;width:65.00px;height:22.5px;background:#0a6cf5"></div>
<div class="a" style="left:546px;top:1037px;width:57.75px;height:22.5px;background:#0a6cf5"></div>
<div class="a" style="left:608.75px;top:1037px;width:58.75px;height:22.5px;background:#0a6cf5"></div>
<div class="a" style="left:672px;top:1037px;width:66.75px;height:22.5px;background:#0a6cf5"></div>
<div class="a" style="left:742.5px;top:1037px;width:60.00px;height:22.5px;background:#0a6cf5"></div>
<div class="a" style="left:806px;top:1037px;width:122.75px;height:22.5px;background:#0a6cf5"></div>
<div class="t" style="left:108px;top:1036.00px;font-size:13.3px;line-height:20px;color:#1f6b45;font-weight:bold;letter-spacing:-0.3px">How To</div>
<div class="t" style="left:184px;top:1036.00px;font-size:12.95px;line-height:20px;color:#ececec;">Scorecard</div>
<div class="t" style="left:270px;top:1036.00px;font-size:13.18px;line-height:20px;color:#ececec;">3 Month Snapshot</div>
<div class="t" style="left:406px;top:1036.00px;font-size:12.8px;line-height:20px;color:#f4f8ff;">Summary</div>
<div class="t" style="left:487.5px;top:1036.00px;font-size:12.66px;line-height:20px;color:#f4f8ff;">Income</div>
<div class="t" style="left:555.75px;top:1036.00px;font-size:12.9px;line-height:20px;color:#f4f8ff;">Needs</div>
<div class="t" style="left:619.25px;top:1036.00px;font-size:12.78px;line-height:20px;color:#f4f8ff;">Wants</div>
<div class="t" style="left:682.5px;top:1036.00px;font-size:12.3px;line-height:20px;color:#f4f8ff;">Savings</div>
<div class="t" style="left:754.5px;top:1036.00px;font-size:12.7px;line-height:20px;color:#f4f8ff;">Giving</div>
<div class="t" style="left:820.5px;top:1036.00px;font-size:12.45px;line-height:20px;color:#f4f8ff;">Account Buckets</div>
<div class="t" style="left:944.5px;top:1036.00px;font-size:13.3px;line-height:20px;color:#ececec;">Short-Term Debts</div>
<div class="t" style="left:1078px;top:1036.00px;font-size:12.2px;line-height:20px;color:#ececec;">Cash Plan</div>
<div class="t" style="left:1164.25px;top:1036.00px;font-size:12.63px;line-height:20px;color:#ececec;">Emergency Fund Plan</div>
<div class="t" style="left:1320px;top:1036.00px;font-size:12.84px;line-height:20px;color:#ececec;">Investmen</div>
<div class="t" style="left:1388px;top:1035.00px;font-size:12px;line-height:20px;color:#ececec;font-weight:bold;">...</div>
<div class="a" style="left:1436px;top:1033px;width:27px;height:27px;background:#2f2f2f"></div>
<div class="a" style="left:1463px;top:1037px;width:437px;height:22px;background:#4b4b4b"></div>
<div class="a" style="left:1481px;top:1041px;width:388px;height:10px;border-radius:5px;background:#c9c9c9"></div>
<svg class="a" style="left:0;top:1033px" width="1920" height="47">
<path d="M27 9 l-4 4 l4 4z" fill="#9a9a9a"/><path d="M51 9 l4 4 l-4 4z" fill="#f0f0f0"/>
<g stroke="#8a8a8a" stroke-width="1.2"><path d="M255 5 V22"/><path d="M392 5 V22"/><path d="M1064 5 V22"/><path d="M1148 5 V22"/><path d="M1305.5 5 V22"/></g>
<circle cx="1420" cy="13" r="8" fill="none" stroke="#efefef" stroke-width="1.5"/><path d="M1420 8.5 V17.5 M1415.5 13 H1424.5" stroke="#efefef" stroke-width="1.6"/>
<circle cx="1449" cy="8" r="1.2" fill="#ddd"/><circle cx="1449" cy="13" r="1.2" fill="#ddd"/><circle cx="1449" cy="18" r="1.2" fill="#ddd"/>
<path d="M1476 8.5 l-5 4.5 l5 4.5z" fill="#dcdcdc"/><path d="M1889 8.5 l5 4.5 l-5 4.5z" fill="#dcdcdc"/>
<!-- status icons -->
<g fill="none" stroke="#d0d0d0" stroke-width="1.1">
 <circle cx="60" cy="33" r="2"/><path d="M54 36 l6 2 l6 -2 M60 38 v3 l-3 4 M60 41 l3 4"/>
 <path d="M1502 31.5 h13 v8 h-5 M1502 31.5 v8 h3"/><circle cx="1510" cy="41" r="2.5"/>
 <rect x="1632.5" y="33.5" width="12" height="12"/><path d="M1636.5 33.5 v12 M1640.5 33.5 v12 M1632.5 37.5 h12 M1632.5 41.5 h12"/>
 <rect x="1673.5" y="33.5" width="12" height="12"/><rect x="1676.5" y="36.5" width="6" height="6"/>
 <path d="M1713.5 45.5 v-12 h12 v12 M1716.5 33.5 v6 h6 v-6"/>
 <path d="M1746 39.5 h7 M1864 39.5 h8 M1868 35.5 v8"/>
</g>
<path d="M1759 39.5 H1858" stroke="#9a9a9a" stroke-width="1"/>
<rect x="1807" y="33" width="5" height="12" fill="#dcdcdc"/>
</svg>
<div class="a" style="left:1660px;top:1061px;width:40px;height:19px;background:#444"></div>
<svg class="a" style="left:1660px;top:1061px" width="40" height="19"><g fill="none" stroke="#d0d0d0" stroke-width="1.1"><rect x="13.5" y="5.5" width="12" height="12"/><rect x="16.5" y="8.5" width="6" height="6"/></g></svg>
<div class="t" style="left:3px;top:1061.00px;font-size:10.8px;line-height:20px;color:#e6e6e6;">Ready</div>
<div class="t" style="left:72px;top:1061.00px;font-size:11.35px;line-height:20px;color:#e6e6e6;">Accessibility: Investigate</div>
<div class="t" style="left:1518px;top:1062.00px;font-size:11.44px;line-height:20px;color:#e6e6e6;">Display Settings</div>
<div class="t" style="left:1885px;top:1061.00px;font-size:10.6px;line-height:20px;color:#e6e6e6;">100%</div>
<svg class="a" style="left:138px;top:1046px" width="16" height="22"><path d="M1.3 1.3 V16.5 L4.9 13.1 L7.6 18.3 L9.9 17.3 L7.3 12.1 H12.1 Z" fill="#fff" stroke="#000" stroke-width="1.1" stroke-linejoin="round"/></svg><svg class="a" style="left:0;top:0" width="1920" height="1080" viewBox="0 0 1920 1080">
<circle cx="960" cy="540" r="296" fill="none" stroke="#006fff" stroke-width="44"/>
<polygon points="860.2,396.8 1108.2,539.5 860.2,682.2" fill="#006fff" stroke="#006fff" stroke-width="35.5" stroke-linejoin="round"/>
</svg>
</body></html>
